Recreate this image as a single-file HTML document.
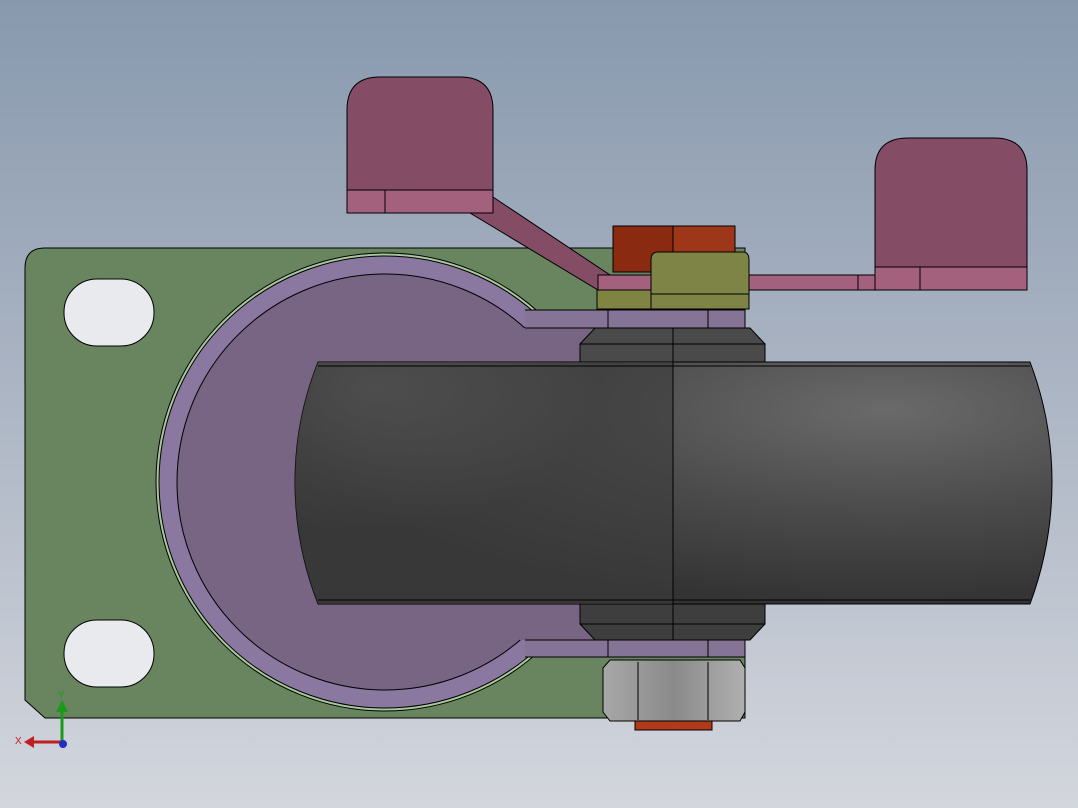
<!DOCTYPE html>
<html><head><style>html,body{margin:0;padding:0;}body{width:1078px;height:808px;overflow:hidden;background:linear-gradient(#8899ae,#a9b3c2 45%,#d3d6dd);}</style></head>
<body>
<svg width="1078" height="808" viewBox="0 0 1078 808" xmlns="http://www.w3.org/2000/svg" style="display:block">
<defs>
<radialGradient id="wh" cx="0.78" cy="0.2" r="0.8"><stop offset="0" stop-color="#6a6a6a"/><stop offset="0.5" stop-color="#4c4c4c"/><stop offset="1" stop-color="#333"/></radialGradient>
<radialGradient id="wh2" cx="0.2" cy="0.1" r="0.6"><stop offset="0" stop-color="#5a5a5a"/><stop offset="1" stop-color="#3c3c3c"/></radialGradient>
<linearGradient id="nut" x1="0" x2="1"><stop offset="0" stop-color="#a8a8a8"/><stop offset="0.5" stop-color="#8a8a8a"/><stop offset="1" stop-color="#b0b0b0"/></linearGradient>
</defs>
<path d="M45 248 H745 V718 H45 L25 700 V268 Q25 248 45 248Z" fill="#688560" stroke="#000" stroke-width="1"/>
<rect x="64" y="279" width="90" height="67" rx="33" fill="#e8eaee" stroke="#000"/>
<rect x="64" y="620" width="90" height="67" rx="33" fill="#e8eaee" stroke="#000"/>
<circle cx="385" cy="482" r="229" fill="#a8c89a" stroke="#000"/>
<circle cx="385" cy="482" r="226" fill="#8a78a0" stroke="#000"/>
<path d="M525 310 H745 V328 H525Z M525 640 H745 V657 H525Z" fill="#857496"/>
<path d="M525 310 H745 M525 657 H745 M745 310 V328 M745 640 V657" stroke="#000" fill="none"/>
<circle cx="385" cy="482" r="208" fill="#776583" stroke="#000"/>
<path d="M520 328 H600 V640 H520Z" fill="#776583"/>
<path d="M525 328 H745 M525 640 H745" stroke="#000"/>
<line x1="608" y1="310" x2="608" y2="328" stroke="#000"/><line x1="708" y1="310" x2="708" y2="328" stroke="#000"/>
<line x1="608" y1="640" x2="608" y2="657" stroke="#000"/><line x1="708" y1="640" x2="708" y2="657" stroke="#000"/>
<path d="M595 328 H750 L765 344 V362 H580 V344Z" fill="#4a4a4a" stroke="#000"/>
<path d="M580 604 H765 V624 L750 640 H595 L580 624Z" fill="#3e3e3e" stroke="#000"/>
<line x1="580" y1="344" x2="765" y2="344" stroke="#000"/><line x1="580" y1="624" x2="765" y2="624" stroke="#000"/>
<path d="M318 362 H1030 Q1052 420 1052 482 Q1052 545 1030 604 H318 Q295 545 295 482 Q295 420 318 362Z" fill="url(#wh)" stroke="#000"/>
<path d="M318 362 H673 V604 H318 Q295 545 295 482 Q295 420 318 362Z" fill="url(#wh2)" opacity="0.6"/>
<line x1="318" y1="366" x2="1030" y2="366" stroke="#000"/><line x1="318" y1="600" x2="1030" y2="600" stroke="#000"/>
<line x1="673" y1="328" x2="673" y2="640" stroke="#000"/>
<rect x="635" y="718" width="77" height="12" fill="#b03a1a" stroke="#000"/>
<path d="M610 660 H740 L745 668 V712 L740 721 H610 L603 712 V668Z" fill="url(#nut)" stroke="#000"/>
<line x1="638" y1="662" x2="638" y2="720" stroke="#000"/><line x1="708" y1="662" x2="708" y2="720" stroke="#000"/>
<path d="M347 213 V110 Q347 77 380 77 H460 Q493 77 493 110 V197 L610 275 H875 V170 Q875 138 908 138 H994 Q1027 138 1027 170 V290 H598 L470 213Z" fill="#854d65" stroke="#000"/>
<path d="M347 190 H493 V213 H347Z" fill="#a4617d" stroke="#000"/>
<path d="M875 267 H1027 V290 H875Z" fill="#a4617d" stroke="#000"/>
<path d="M598 275 H875 V290 H598Z" fill="#a4617d" stroke="#000"/>
<line x1="385" y1="190" x2="385" y2="213" stroke="#000"/><line x1="858" y1="275" x2="858" y2="290" stroke="#000"/><line x1="920" y1="267" x2="920" y2="290" stroke="#000"/>
<path d="M613 226 H735 V272 H613Z" fill="#9e361a" stroke="#000"/>
<rect x="613.5" y="226.5" width="59" height="45" fill="#8a2a10"/>
<line x1="673" y1="226" x2="673" y2="272" stroke="#000"/>
<rect x="597" y="290" width="56" height="19" fill="#7f8442" stroke="#000"/>
<path d="M658 252 H743 Q749 252 749 260 V309 H651 V260 Q651 252 658 252Z" fill="#7d8446" stroke="#000"/>
<line x1="651" y1="294" x2="749" y2="294" stroke="#000"/>
<line x1="62" y1="742" x2="62" y2="710" stroke="#1a9a1a" stroke-width="3"/>
<path d="M56 712 L62 700 L68 712Z" fill="#1a9a1a"/>
<line x1="62" y1="742" x2="32" y2="742" stroke="#c02020" stroke-width="3"/>
<path d="M34 736 L24 742 L34 748Z" fill="#c02020"/>
<circle cx="63" cy="744" r="4" fill="#2030c0"/>
<text x="58" y="698" font-family="Liberation Sans, sans-serif" font-size="10" fill="#1a9a1a">Y</text>
<text x="15" y="744" font-family="Liberation Sans, sans-serif" font-size="10" fill="#c02020">X</text>
</svg>
</body></html>
